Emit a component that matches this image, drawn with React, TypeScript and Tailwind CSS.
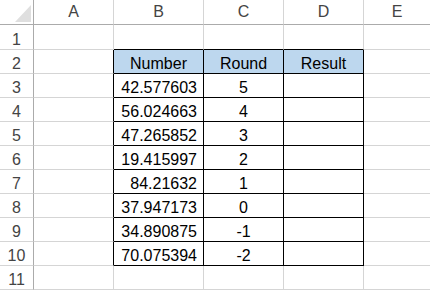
import clsx from "clsx";

const cols = ["A", "B", "C", "D", "E"];

const numbers = [
  "42.577603",
  "56.024663",
  "47.265852",
  "19.415997",
  "84.21632",
  "37.947173",
  "34.890875",
  "70.075394",
];
const rounds = ["5", "4", "3", "2", "1", "0", "-1", "-2"];

// table occupies B2:D10 -> col index 1..3, row 2..10
const inTable = (r: number, c: number) => r >= 2 && r <= 10 && c >= 1 && c <= 3;

function cellText(r: number, c: number) {
  if (r === 2) return ["Number", "Round", "Result"][c - 1] ?? "";
  if (r >= 3 && r <= 10) {
    if (c === 1) return numbers[r - 3];
    if (c === 2) return rounds[r - 3];
  }
  return "";
}

export default function App() {
  const rows = Array.from({ length: 11 }, (_, i) => i + 1);

  return (
    <div className="h-[290px] w-[430px] overflow-hidden bg-white font-['Liberation_Sans',Arial,sans-serif] text-[16px]">
      <div className="grid grid-cols-[34px_80px_90px_80px_80px_1fr]">
        {/* header row */}
        <div className="relative h-[25px] border-b border-r border-[#ababab]">
          <svg className="absolute left-0 top-0" width="33" height="24" viewBox="0 0 33 24">
            <polygon points="15,22 31,22 31,5" fill="#dfdfdf" />
          </svg>
        </div>
        {cols.map((col, i) => (
          <div
            key={col}
            className={clsx(
              "flex h-[25px] items-center justify-center border-b border-[#ababab] leading-none text-[#444]",
              i < cols.length - 1 && "border-r border-r-[#d5d5d5]"
            )}
          >
            {col}
          </div>
        ))}

        {rows.map((r) => (
          <Row key={r} r={r} />
        ))}
      </div>
    </div>
  );
}

function Row({ r }: { r: number }) {
  const h = r === 1 ? "h-[25px]" : "h-[24px]";
  return (
    <>
      <div
        className={clsx(
          "flex items-end justify-center border-b border-r border-b-[#d5d5d5] border-r-[#ababab] leading-[18px] text-[#444]",
          h
        )}
      >
        {r}
      </div>
      {cols.map((_, c) => {
        const text = cellText(r, c);
        const rightBlack = inTable(r, c) || inTable(r, c + 1);
        const bottomBlack = inTable(r, c) || inTable(r + 1, c);
        return (
          <div
            key={c}
            className={clsx(
              "flex items-end border-b leading-[18px] text-black",
              h,
              c < cols.length - 1 && "border-r",
              rightBlack ? "border-r-black" : "border-r-[#d5d5d5]",
              bottomBlack ? "border-b-black" : "border-b-[#d5d5d5]",
              r === 2 && c >= 1 && c <= 3 && "bg-[#bdd7ee]",
              r === 2 || c !== 1 ? "justify-center" : "justify-end pr-[6px]"
            )}
          >
            {text}
          </div>
        );
      })}
    </>
  );
}
